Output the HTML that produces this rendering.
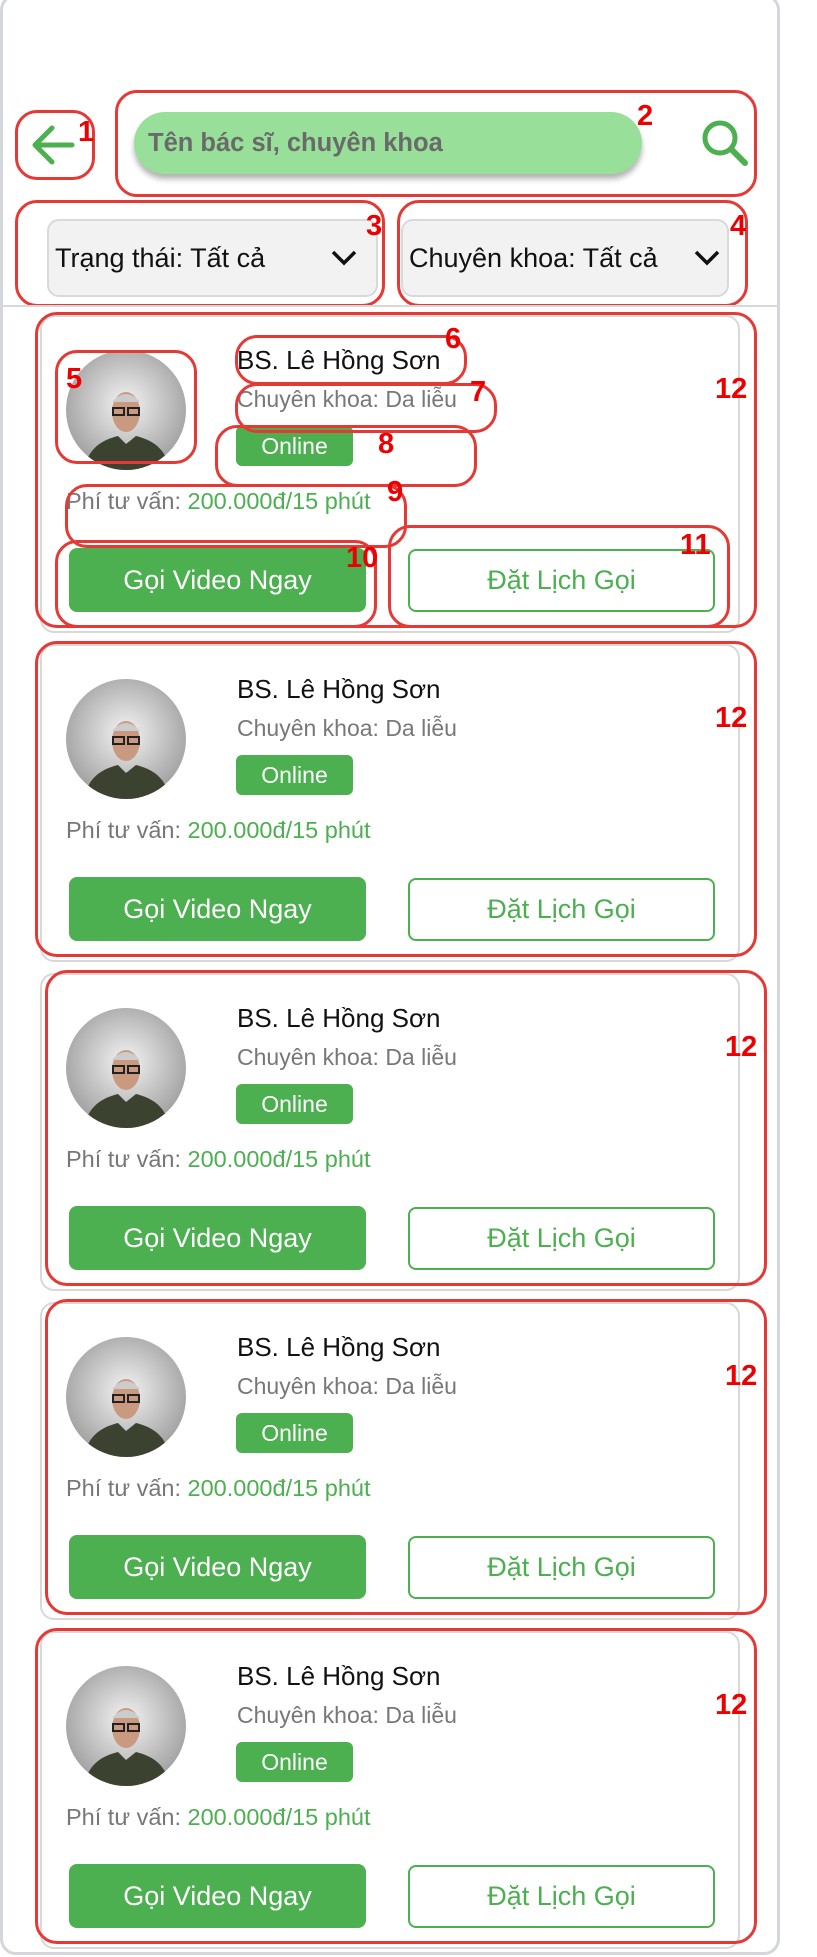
<!DOCTYPE html>
<html><head><meta charset="utf-8"><style>
*{margin:0;padding:0;box-sizing:border-box}
body{width:817px;height:1957px;background:#fff;position:relative;overflow:hidden;font-family:"Liberation Sans",Roboto,sans-serif}
.abs{position:absolute}
.frame{left:0;top:-6px;width:780px;height:1961px;border:3px solid #d3d6dc;border-radius:16px}
.red{position:absolute;border:3px solid #e53935;border-radius:22px}
.lbl{position:absolute;color:#e00;font-weight:bold;font-size:29px;line-height:29px}
.dd{position:absolute;background:#f2f2f2;border:2px solid #d9d9d9;border-radius:12px;font-size:27px;color:#111;display:flex;align-items:center;padding-left:6px}
.card{position:absolute;left:40px;width:700px;height:318px;border:2px solid #d8d8d8;border-radius:14px}
.name{position:absolute;left:237px;font-size:26px;color:#111;font-weight:500}
.spec{position:absolute;left:237px;font-size:23px;color:#777}
.badge{position:absolute;left:236px;width:117px;height:40px;background:#4caf50;color:#fff;border-radius:6px;font-size:23px;display:flex;align-items:center;justify-content:center}
.fee{position:absolute;left:66px;font-size:23.5px;color:#777}
.fee span{color:#4caf50}
.b1{position:absolute;left:69px;width:297px;height:64px;background:#4caf50;color:#fff;border-radius:8px;font-size:27px;display:flex;align-items:center;justify-content:center}
.b2{position:absolute;left:408px;width:307px;height:63px;background:#fff;color:#4caf50;border:2px solid #4caf50;border-radius:8px;font-size:27px;display:flex;align-items:center;justify-content:center;font-weight:500}
.av{position:absolute;left:66px;width:120px;height:120px;border-radius:50%;overflow:hidden}
</style></head><body>
<div class="abs frame"></div>

<div class="red" style="left:15px;top:110px;width:80px;height:70px"></div>
<svg class="abs" style="left:30px;top:122px" width="48" height="46" viewBox="0 0 48 46"><path d="M42 23H6M22 6L5 23l17 17" fill="none" stroke="#4caf50" stroke-width="5" stroke-linecap="round" stroke-linejoin="round"/></svg>
<div class="lbl" style="left:78px;top:118px">1</div>

<div class="red" style="left:115px;top:90px;width:642px;height:107px"></div>
<div class="abs" style="left:134px;top:112px;width:508px;height:62px;background:#98e09a;border-radius:31px;box-shadow:0 5px 6px rgba(0,0,0,.3);font-size:25.5px;font-weight:bold;color:#6a6a6a;display:flex;align-items:center;padding-left:14px">Tên bác sĩ, chuyên khoa</div>
<div class="lbl" style="left:637px;top:102px">2</div>
<svg class="abs" style="left:700px;top:118px" width="52" height="50" viewBox="0 0 52 50"><circle cx="20" cy="20" r="15" fill="none" stroke="#4caf50" stroke-width="5"/><path d="M31 31l14 14" stroke="#4caf50" stroke-width="6" stroke-linecap="round"/></svg>

<div class="red" style="left:15px;top:200px;width:370px;height:107px"></div>
<div class="dd" style="left:47px;top:219px;width:331px;height:78px">Trạng thái: Tất cả</div>
<svg class="abs" style="left:330px;top:248px" width="28" height="20" viewBox="0 0 28 20"><path d="M3 4l11 11L25 4" fill="none" stroke="#111" stroke-width="3.5"/></svg>
<div class="lbl" style="left:366px;top:212px">3</div>
<div class="red" style="left:397px;top:200px;width:351px;height:107px"></div>
<div class="dd" style="left:401px;top:219px;width:328px;height:78px">Chuyên khoa: Tất cả</div>
<svg class="abs" style="left:693px;top:248px" width="28" height="20" viewBox="0 0 28 20"><path d="M3 4l11 11L25 4" fill="none" stroke="#111" stroke-width="3.5"/></svg>
<div class="lbl" style="left:730px;top:212px">4</div>
<div class="abs" style="left:0;top:305px;width:780px;height:2px;background:#d8d8d8"></div>

<svg width="0" height="0" style="position:absolute"><defs><radialGradient id="g" cx="50%" cy="45%" r="60%"><stop offset="0" stop-color="#f4f4f4"/><stop offset="1" stop-color="#9a9a9a"/></radialGradient></defs></svg>

<div id="cards"></div>
<script>
var tops=[315,644,973,1302,1631],rx=[35,35,45,45,35];
var h='';
tops.forEach(function(T,i){
h+='<div class="card" style="top:'+T+'px"></div>';
h+='<div class="red" style="left:'+rx[i]+'px;top:'+(T-3)+'px;width:722px;height:316px"></div>';
h+='<div class="lbl" style="left:'+(rx[i]+680)+'px;top:'+(T+60)+'px">12</div>';
h+='<div class="av" style="top:'+(T+35)+'px"><svg width="120" height="120" viewBox="0 0 120 120"><rect width="120" height="120" fill="url(#g)"/><path d="M18 120c4-22 18-30 34-34l8 8 10-8c16 4 30 12 34 34z" fill="#3b4230"/><ellipse cx="60" cy="62" rx="14" ry="20" fill="#c99a80"/><path d="M46 52q14-16 28 0" fill="#ccc"/><rect x="47" y="58" width="11" height="7" fill="none" stroke="#222" stroke-width="2"/><rect x="62" y="58" width="11" height="7" fill="none" stroke="#222" stroke-width="2"/></svg></div>';
h+='<div class="name" style="top:'+(T+30)+'px">BS. Lê Hồng Sơn</div>';
h+='<div class="spec" style="top:'+(T+71)+'px">Chuyên khoa: Da liễu</div>';
h+='<div class="badge" style="top:'+(T+111)+'px">Online</div>';
h+='<div class="fee" style="top:'+(T+173)+'px">Phí tư vấn: <span>200.000đ/15 phút</span></div>';
h+='<div class="b1" style="top:'+(T+233)+'px">Gọi Video Ngay</div>';
h+='<div class="b2" style="top:'+(T+234)+'px">Đặt Lịch Gọi</div>';
if(i==0){
h+='<div class="red" style="left:55px;top:'+(T+35)+'px;width:142px;height:114px"></div><div class="lbl" style="left:66px;top:'+(T+50)+'px">5</div>';
h+='<div class="red" style="left:235px;top:'+(T+20)+'px;width:232px;height:50px"></div><div class="lbl" style="left:445px;top:'+(T+10)+'px">6</div>';
h+='<div class="red" style="left:235px;top:'+(T+68)+'px;width:262px;height:50px"></div><div class="lbl" style="left:470px;top:'+(T+63)+'px">7</div>';
h+='<div class="red" style="left:215px;top:'+(T+110)+'px;width:262px;height:62px"></div><div class="lbl" style="left:378px;top:'+(T+115)+'px">8</div>';
h+='<div class="red" style="left:65px;top:'+(T+169)+'px;width:342px;height:64px"></div><div class="lbl" style="left:387px;top:'+(T+163)+'px">9</div>';
h+='<div class="red" style="left:55px;top:'+(T+225)+'px;width:322px;height:88px"></div><div class="lbl" style="left:346px;top:'+(T+229)+'px">10</div>';
h+='<div class="red" style="left:388px;top:'+(T+210)+'px;width:342px;height:103px"></div><div class="lbl" style="left:680px;top:'+(T+216)+'px">11</div>';
}
});
document.getElementById('cards').innerHTML=h;
</script>
</body></html>
